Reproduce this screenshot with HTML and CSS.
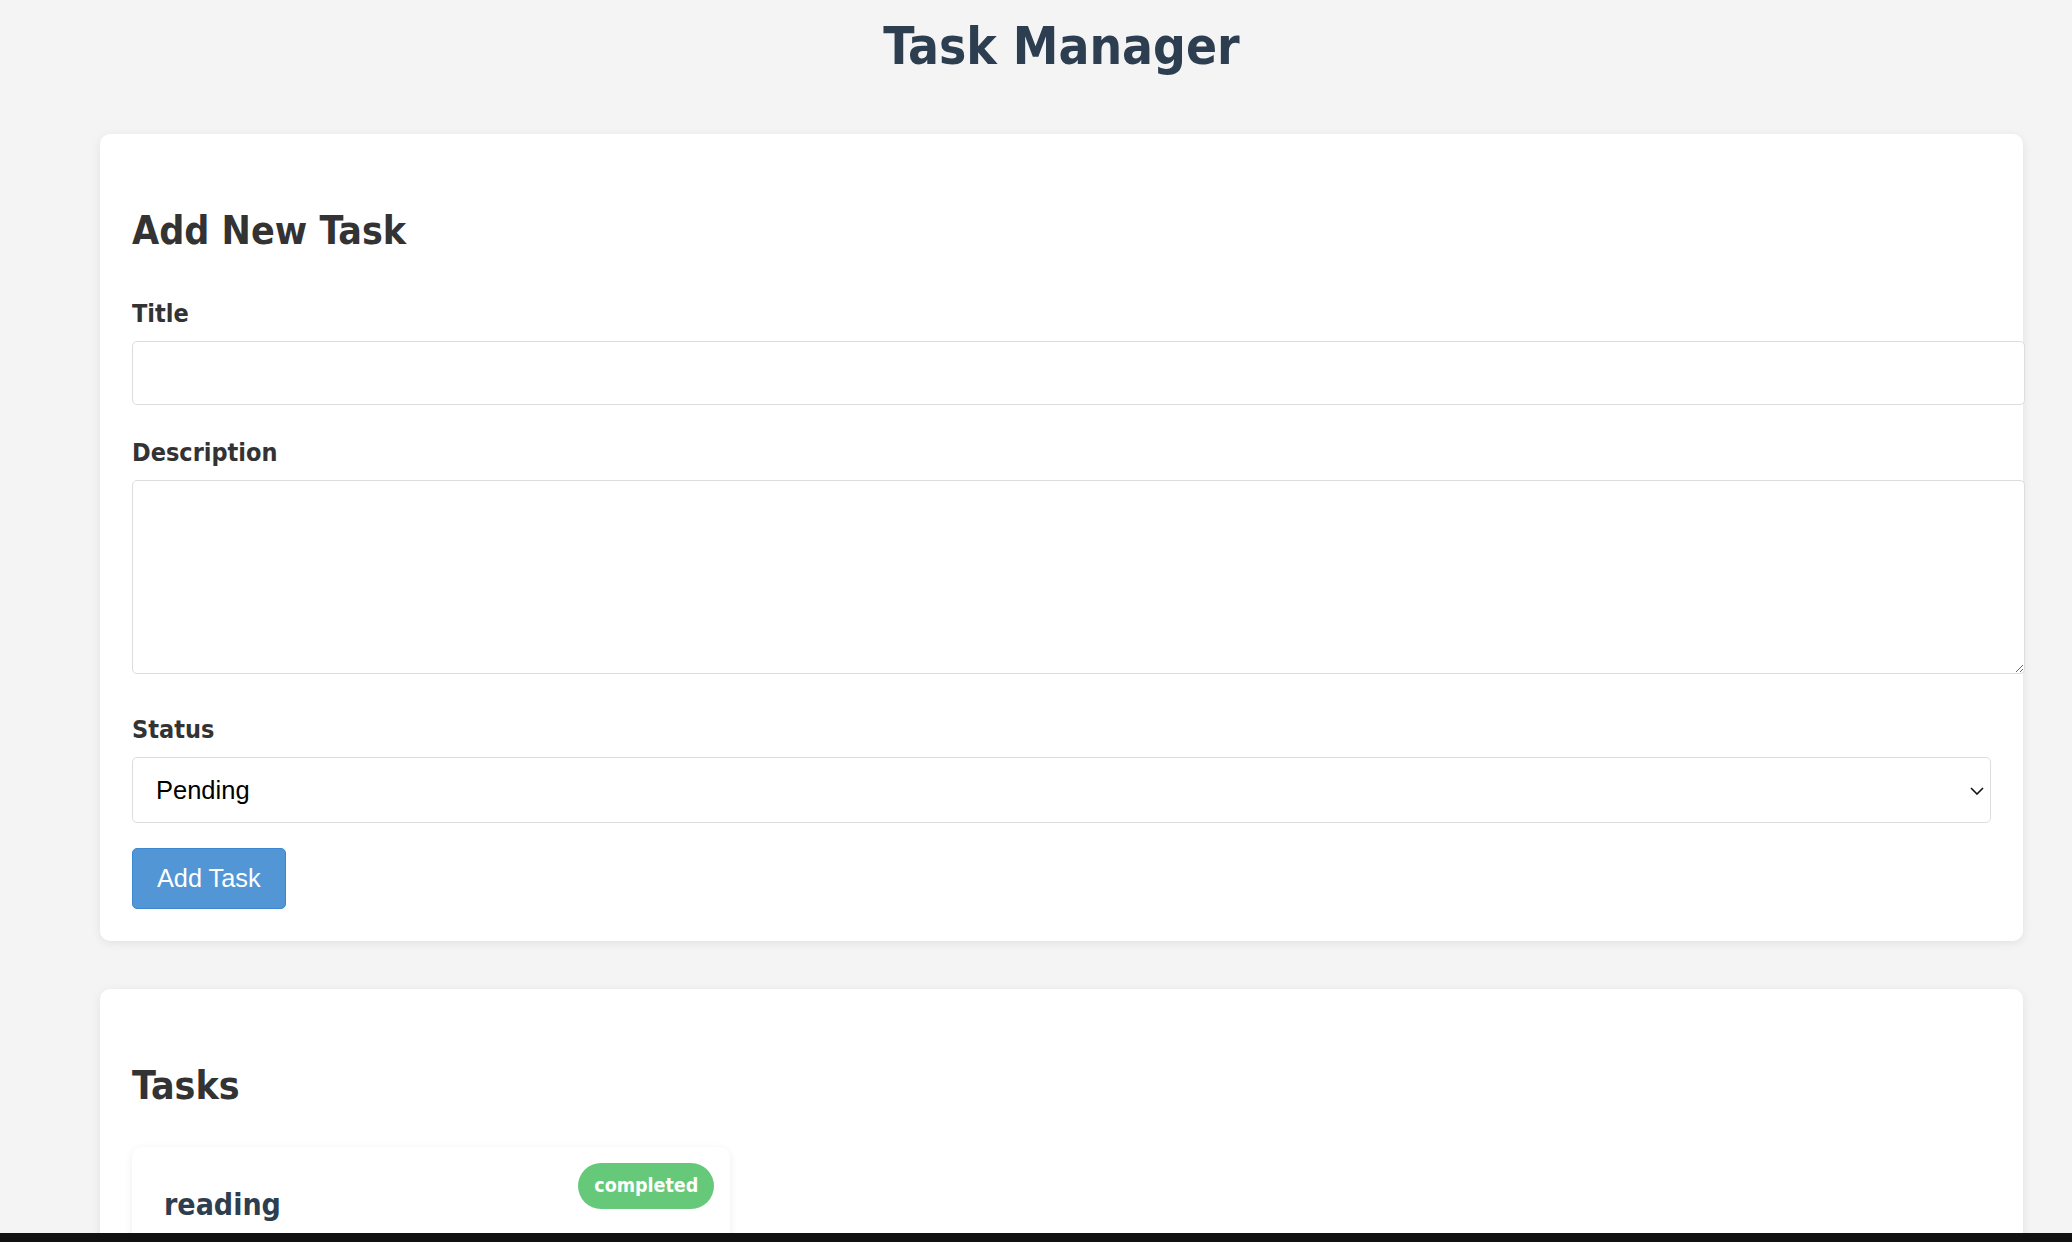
FILE: index.html
```html
<!DOCTYPE html>
<html lang="en">
<head>
<meta charset="utf-8">
<title>Task Manager</title>
<link rel="stylesheet" href="styles.css">
</head>
<body>
<div class="container">
  <h1 class="page-title">Task Manager</h1>

  <section class="card">
    <h2 class="card-title">Add New Task</h2>
    <form class="task-form">
      <div class="form-group">
        <label class="field-label" for="title">Title</label>
        <input class="field-input" id="title" type="text">
      </div>
      <div class="form-group group-area">
        <label class="field-label" for="desc">Description</label>
        <textarea class="field-area" id="desc"></textarea>
      </div>
      <div class="form-group group-select">
        <label class="field-label" for="status">Status</label>
        <div class="select-wrap">
          <select class="field-select" id="status">
            <option>Pending</option>
            <option>In Progress</option>
            <option>Completed</option>
          </select>
          <svg class="select-chevron" width="14" height="8" viewBox="0 0 14 8"><path d="M1 1 L7 7 L13 1" fill="none" stroke="#111" stroke-width="1.6"/></svg>
        </div>
      </div>
      <button class="btn-add" type="button">Add Task</button>
    </form>
  </section>

  <section class="card card-tasks">
    <h2 class="card-title">Tasks</h2>
    <div class="task-grid">
      <article class="task-card">
        <span class="badge badge-completed">completed</span>
        <h3 class="task-title">reading</h3>
      </article>
    </div>
  </section>
</div>
<div class="bottom-bar"></div>
</body>
</html>
```

FILE: styles.css
```css
html, body {
  margin: 0;
  padding: 0;
}

body {
  background: #f4f4f4;
  font-family: "Liberation Sans", Arial, sans-serif;
  color: #333;
}

.container {
  margin-left: 100px;
  width: 1923px;
  padding-bottom: 60px;
}

.page-title {
  font-family: "DejaVu Sans Condensed", "DejaVu Sans", sans-serif;
  font-weight: bold;
  font-size: 51px;
  line-height: 60px;
  color: #2c3e50;
  text-align: center;
  margin: 16.5px 0 57.5px;
}

.card {
  background: #fff;
  border-radius: 10px;
  box-shadow: 0 2px 10px rgba(0, 0, 0, 0.08);
  padding: 32px;
  margin-bottom: 48px;
}

.card-title {
  font-family: "DejaVu Sans Condensed", "DejaVu Sans", sans-serif;
  font-weight: bold;
  font-size: 39px;
  line-height: 47px;
  color: #333;
  margin: 41px 0 45px;
}

.card-tasks .card-title {
  margin-bottom: 38px;
}

.task-form {
  margin: 0;
}

.form-group {
  margin-bottom: 33px;
}

.group-area {
  margin-bottom: 41px;
}

.group-select {
  margin-bottom: 25px;
}

.field-label {
  display: block;
  font-family: "DejaVu Sans Condensed", "DejaVu Sans", sans-serif;
  font-weight: bold;
  font-size: 25px;
  line-height: 30px;
  color: #333;
  margin-bottom: 12px;
}

.field-input,
.field-area {
  display: block;
  width: 100%;
  box-sizing: content-box;
  padding: 0 16px;
  border: 1px solid #ddd;
  border-radius: 5px;
  background: #fff;
  font-family: "Liberation Sans", Arial, sans-serif;
  font-size: 24px;
  margin: 0;
}

.field-input {
  height: 62px;
}

.field-area {
  height: 192px;
  resize: vertical;
}

.select-wrap {
  position: relative;
}

.field-select {
  display: block;
  width: 100%;
  height: 66px;
  box-sizing: border-box;
  -webkit-appearance: none;
  appearance: none;
  border: 1px solid #ddd;
  border-radius: 5px;
  background: #fff;
  padding: 0 40px 0 23px;
  font-family: "Liberation Sans", Arial, sans-serif;
  font-size: 25.5px;
  color: #000;
  margin: 0;
}

.select-chevron {
  position: absolute;
  right: 7px;
  top: 30px;
  pointer-events: none;
}

.btn-add {
  display: block;
  height: 61px;
  padding: 0 24px;
  background: #5296d6;
  border: 1px solid #3c88d0;
  border-radius: 5px;
  color: #fff;
  font-family: "Liberation Sans", Arial, sans-serif;
  font-size: 25.3px;
  cursor: pointer;
}

.task-grid {
  display: grid;
  grid-template-columns: repeat(3, 1fr);
  gap: 32px;
}

.task-card {
  position: relative;
  background: #fff;
  border-radius: 10px;
  box-shadow: 0 2px 8px rgba(0, 0, 0, 0.07);
  padding: 32px;
  min-height: 200px;
}

.task-title {
  font-family: "DejaVu Sans Condensed", "DejaVu Sans", sans-serif;
  font-weight: bold;
  font-size: 30px;
  line-height: 36px;
  color: #2c3e50;
  margin: 8px 0 0;
}

.badge {
  position: absolute;
  top: 16px;
  right: 16px;
  height: 46px;
  box-sizing: border-box;
  padding: 0 16px;
  border-radius: 23px;
  font-family: "DejaVu Sans Condensed", "DejaVu Sans", sans-serif;
  font-weight: bold;
  font-size: 19.5px;
  line-height: 46px;
  color: #fff;
}

.badge-completed {
  background: #66c97a;
}

.bottom-bar {
  position: fixed;
  left: 0;
  right: 0;
  bottom: 0;
  height: 9px;
  background: #111;
}
```
